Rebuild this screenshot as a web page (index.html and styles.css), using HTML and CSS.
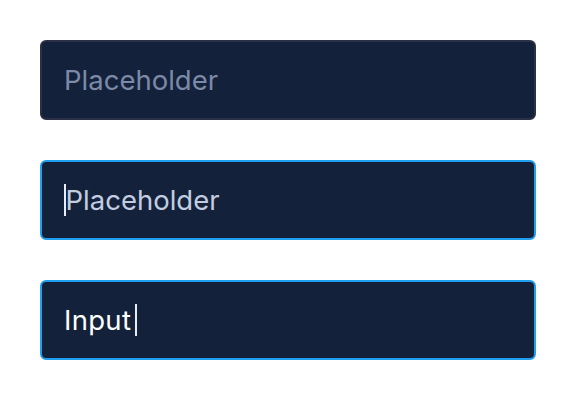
FILE: index.html
```html
<!DOCTYPE html>
<html>
<head>
<meta charset="utf-8">
<link rel="stylesheet" href="styles.css">
</head>
<body>
<div class="stack">
  <div class="field"><span class="placeholder">Placeholder</span></div>
  <div class="field focus"><span class="caret"></span><span class="placeholder light">Placeholder</span></div>
  <div class="field focus"><span class="value">Input</span><span class="caret"></span></div>
</div>
</body>
</html>
```
FILE: styles.css
```css
html, body { margin: 0; padding: 0; background: #ffffff; }
body { font-family: Inter, "Noto Sans", sans-serif; }
.stack {
  display: flex;
  flex-direction: column;
  gap: 40px;
  padding: 40px;
  width: 496px;
}
.field {
  box-sizing: border-box;
  height: 80px;
  background: #14213a;
  border: 2px solid #2c3047;
  border-radius: 6px;
  display: flex;
  align-items: center;
  padding: 0 22px;
  font-size: 27.5px;
}
.field.focus { border-color: #1f9ff0; }
.placeholder { color: #7b8aa8; }
.placeholder.light { color: #c3cde0; margin-left: -0.5px; }
.value { color: #ffffff; letter-spacing: 0.3px; }
.caret {
  display: inline-block;
  width: 2px;
  height: 32px;
  background: #e8ecf4;
}
.value + .caret { margin-left: 3.5px; }
```
